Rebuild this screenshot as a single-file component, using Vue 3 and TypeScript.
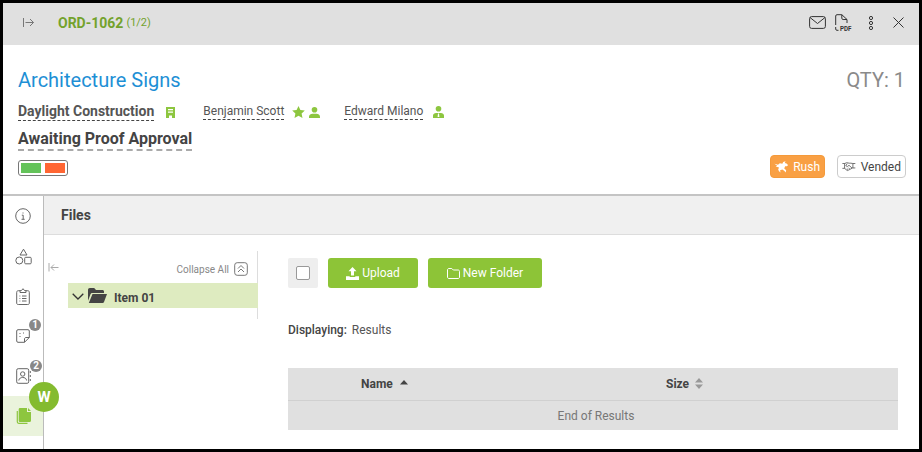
<script setup lang="ts">
const tabs = ['info', 'shapes', 'clip', 'note', 'contact', 'files'];
const badges: Record<string, number> = { note: 1, contact: 2 };
</script>

<template>
  <div class="frame">
    <header class="topbar">
      <svg class="expand" width="11" height="9" viewBox="0 0 11 9" fill="none" stroke="#777" stroke-width="1"><path d="M.5 0v9M2.500 4.500h8M7 1l3.500 3.500L7 8"/></svg>
      <span class="ord">ORD-1062</span>
      <span class="count">(1/2)</span>
      <div class="top-actions">
        <svg width="17" height="13" viewBox="0 0 17 13" fill="none" stroke="#333" stroke-width="1"><rect x="0.6" y="0.6" width="15.8" height="11.8" rx="2"/><path d="M1 1.500l7.500 6 7.500-6"/></svg>
        <svg class="pdf" width="17" height="17" viewBox="0 0 17 17" fill="none" stroke="#333" stroke-width="1"><path d="M.7 11V2C.7 1.200 1.200.7 2 .7h4.800L12 5.500V9M6.800.7v3.500c0 .8.500 1.300 1.300 1.300H12M.7 13v2.100c0 .8.500 1.200 1.300 1.200h1.500"/><text x="5" y="16.500" font-size="6.500" font-weight="700" fill="#333" stroke="none" font-family="Roboto, sans-serif" textLength="11.500" lengthAdjust="spacingAndGlyphs">PDF</text></svg>
        <svg class="dots" width="6" height="14" viewBox="0 0 6 14" fill="none" stroke="#333" stroke-width="1"><circle cx="3" cy="2" r="1.600"/><circle cx="3" cy="7" r="1.600"/><circle cx="3" cy="12" r="1.600"/></svg>
        <svg class="close" width="11" height="11" viewBox="0 0 11 11" fill="none" stroke="#333" stroke-width="1"><path d="M.5.5l10 10M10.500.5l-10 10"/></svg>
      </div>
    </header>

    <section class="summary">
      <div class="title-row">
        <h1>Architecture Signs</h1>
        <span class="qty">QTY: 1</span>
      </div>
      <div class="people">
        <span class="company dashed">Daylight Construction</span>
        <svg class="ic-building" width="9" height="11" viewBox="0 0 9 11"><path fill="#8dc63f" d="M0 0h9v11H6V8.500H3V11H0zM2 2v1.200h5V2zm0 2.500v1.200h5V4.500z" fill-rule="evenodd"/></svg>
        <span class="person dashed p1">Benjamin Scott</span>
        <svg class="ic-star" width="13" height="12" viewBox="0 0 13 12"><path fill="#8dc63f" d="M6.500 0l1.900 4 4.400.5-3.200 3 .9 4.400-4-2.200-4 2.200.9-4.400L.2 4.500 4.600 4z"/></svg>
        <svg class="ic-user" width="11" height="11" viewBox="0 0 11 11"><circle cx="5.500" cy="2.800" r="2.800" fill="#8dc63f"/><path fill="#8dc63f" d="M0 11V9.500C0 7.800 1.800 6.700 3.500 6.700h4C9.200 6.700 11 7.800 11 9.500V11z"/></svg>
        <span class="person dashed p2">Edward Milano</span>
        <svg class="ic-user2" width="11" height="12" viewBox="0 0 11 12"><circle cx="5.500" cy="2.800" r="2.800" fill="#8dc63f"/><path fill="#8dc63f" fill-rule="evenodd" d="M0 12V9.500C0 8 1.500 7 3 7h5c1.500 0 3 1 3 2.500V12zM5 7.500l-.4 3.500h1.800L6 7.500z"/></svg>
      </div>
      <div class="status"><span class="dashed-strong">Awaiting Proof Approval</span></div>
      <div class="bottom-row">
        <div class="progress"><i class="green"></i><i class="orange"></i></div>
        <div class="tags">
          <span class="tag rush">
            <svg width="17" height="14" viewBox="0 0 17 14" fill="#fff"><path d="M.5 3l4.300 1.200L7 2.500l3 .7L11 1l2.800-1-.8 2.300 2 .5 2 1.900-1.700 1.500h-2l-1 2.500L14.600 11l-.6 2.500-1.500-1.800-2.500-1.700-2.700 1 .5 2.500L6 12l-1-2 1-2.300-4-1.200 1.800-1z"/></svg>
            Rush
          </span>
          <span class="tag vended">
            <svg width="17" height="11" viewBox="0 0 17 11" fill="none" stroke="#555" stroke-width="1"><path d="M.5 1.800h2.700l2.800-1 3 .6h2l2.500.4h3M.5 7.800h2.700l3.300 2.700 1.500-.5 3-1.500 2-1.200h3.500M6.500 2L4.700 4.500l2 1 2-1.500 3.800 3.500M3.200 1.500v6.500M13.500 2v5.500M6 8l1.500 1.500M8 7l1.500 1.500"/></svg>
            Vended
          </span>
        </div>
      </div>
    </section>

    <div class="body">
      <nav class="side">
        <div v-for="t in tabs" :key="t" class="tab" :class="['tab-' + t, { active: t === 'files' }]">
          <svg v-if="t === 'info'" width="16" height="16" viewBox="0 0 16 16" fill="none" stroke="#666" stroke-width="1"><circle cx="8" cy="8" r="7.300"/><path d="M6.800 7.200h1.400v4M6.500 11.300h3.200M8 4.500v1"/></svg>
          <svg v-else-if="t === 'shapes'" width="17" height="17" viewBox="0 0 17 17" fill="none" stroke="#666" stroke-width="1"><path d="M8.500 1.200L12 7H5z"/><circle cx="4.300" cy="12.500" r="3.500"/><rect x="9.700" y="9.300" width="6.500" height="6.500" rx="1"/></svg>
          <svg v-else-if="t === 'clip'" width="14" height="17" viewBox="0 0 14 17" fill="none" stroke="#666" stroke-width="1"><path d="M4 2.700H2.300C1.300 2.700.7 3.300.7 4.300v10.900c0 .9.600 1.300 1.600 1.300h9.400c1 0 1.600-.4 1.600-1.300V4.300c0-1-.6-1.600-1.600-1.600H10M4 4.500V2.700l1.500-.2L7 .7l1.500 1.800 1.500.2v1.800zM3.500 8h.8M6 8h4.500M3.500 10.500h.8M6 10.500h4.500M3.500 13h.8M6 13h4.500"/></svg>
          <svg v-else-if="t === 'note'" width="14" height="14" viewBox="0 0 14 14" fill="none" stroke="#666" stroke-width="1"><path d="M13.300 8.500V2c0-.8-.5-1.300-1.300-1.300H2C1.200.7.700 1.200.7 2v10c0 .8.500 1.300 1.300 1.300h6.500zM8.500 13.300V10c0-.8.600-1.500 1.500-1.500h3.300"/><path stroke-dasharray="1 2" d="M4 4v6M7 4h3"/></svg>
          <svg v-else-if="t === 'contact'" width="15" height="16" viewBox="0 0 15 16" fill="none" stroke="#666" stroke-width="1"><rect x=".7" y=".7" width="12" height="14.600" rx="1.500"/><circle cx="6.700" cy="6" r="2.200"/><path d="M2.800 12.500c.3-2.300 2-3 3.900-3s3.600.7 3.900 3M14.300 3v2M14.300 7v2M14.300 11v2"/></svg>
          <svg v-else width="15" height="16" viewBox="0 0 15 16" fill="#8dc63f"><path d="M4 0h7v4h4v8.500c0 .8-.5 1.500-1.400 1.500H4c-.8 0-1.300-.7-1.300-1.500V1.300C2.700.6 3.200 0 4 0zM12 0l3 3h-3z"/><path d="M.7 3v10.500C.7 15 1.600 16 3 16h8.500v-1.200H3c-.7 0-1.100-.5-1.100-1.300V3z"/></svg>
          <span v-if="badges[t]" class="badge">{{ badges[t] }}</span>
        </div>
        <span class="presence">W</span>
      </nav>

      <main class="content">
        <div class="panel-title">Files</div>
        <div class="panel-body">
          <aside class="tree">
            <svg class="collapse-side" width="11" height="9" viewBox="0 0 11 9" fill="none" stroke="#aaa" stroke-width="1"><path d="M1 0v8.500M10.500 4.500H3M6 1.500l-3 3 3 3"/></svg>
            <div class="tree-inner">
              <div class="collapse-all">
                <span>Collapse All</span>
                <svg width="14" height="14" viewBox="0 0 14 14" fill="none" stroke="#777" stroke-width="1"><rect x=".7" y=".7" width="12.600" height="12.600" rx="2.500"/><path d="M4 6.500l3-3 3 3M4 10l3-3 3 3"/></svg>
              </div>
              <div class="tree-row">
                <svg class="chev" width="12" height="7" viewBox="0 0 12 7" fill="none" stroke="#333" stroke-width="1.300"><path d="M.7.7L6 6l5.300-5.300"/></svg>
                <svg class="folder" width="19" height="15" viewBox="0 0 19 15" fill="#444"><path d="M0 2C0 .9.700 0 1.800 0h4.400L8 2h6.500c.8 0 1.500.6 1.500 1.500V5H4.500C3.500 5 2.800 5.500 2.500 6.300L0 12.800z"/><path d="M4.500 6H19l-3 8c-.2.600-.7 1-1.400 1H.8z"/></svg>
                <span class="item-label">Item 01</span>
              </div>
            </div>
          </aside>

          <div class="files">
            <div class="toolbar">
              <div class="check-wrap"><span class="check"></span></div>
              <button class="btn upload" type="button">
                <svg width="13" height="13" viewBox="0 0 13 13" fill="#fff"><path d="M6.500 0l4 4.300H8v4.200H5V4.300H2.500zM0 9.300h3.700v.7h5.600v-.7H13V13H0z"/></svg>
                Upload
              </button>
              <button class="btn newfolder" type="button">
                <svg width="13" height="11" viewBox="0 0 13 11" fill="none" stroke="#fff" stroke-width="1"><path d="M.5 2C.5 1.100 1 .5 2 .5h2.800L6.300 2H11c1 0 1.500.5 1.500 1.500V9c0 1-.5 1.500-1.500 1.500H2C1 10.500.5 10 .5 9z"/></svg>
                New Folder
              </button>
            </div>
            <p class="displaying"><b>Displaying:</b> <span>Results</span></p>
            <div class="table">
              <div class="thead">
                <span class="col-name">Name <svg width="8" height="5" viewBox="0 0 8 5" class="sort"><path fill="#444" d="M4 0l4 4.500H0z"/></svg></span>
                <span class="col-size">Size <svg width="8" height="11" viewBox="0 0 8 11" class="sort2"><path fill="#999" d="M4 0l4 4.500H0zM4 11L0 6.500h8z"/></svg></span>
              </div>
              <div class="tfoot">End of Results</div>
            </div>
          </div>
        </div>
      </main>
    </div>
  </div>
</template>

<style>
html, body { margin: 0; padding: 0; background: #000; overflow: hidden; }
</style>

<style scoped>
* { box-sizing: border-box; }
.frame {
  width: 922px; height: 452px; border: 3px solid #000; background: #fff;
  display: flex; flex-direction: column; overflow: hidden;
  font-family: Roboto, "Liberation Sans", sans-serif; color: #444;
}
.topbar {
  height: 42px; background: #e0e0e0; display: flex; align-items: center;
  padding: 0 0 3px 20px; flex: none;
}
.ord { margin-left: 24px; font-size: 14px; font-weight: 700; color: #73a22c; }
.count { margin-left: 3px; font-size: 11px; font-weight: 400; color: #73a22c; }
.top-actions { margin-left: auto; display: flex; align-items: center; padding-right: 15px; }
.pdf { margin-left: 9px; }
.dots { margin-left: 16px; }
.close { margin-left: 19px; }

.summary { height: 151px; flex: none; border-bottom: 2px solid #c4c4c4; padding: 0 15px; }
.title-row { display: flex; justify-content: space-between; align-items: center; padding-top: 22px; height: 47px; }
h1 { margin: 0; font-size: 20px; font-weight: 400; color: #1e8fd5; line-height: 24px; }
.qty { font-size: 20px; color: #8a8a8a; line-height: 24px; margin-right: -1px; }
.people { display: flex; align-items: center; height: 22px; margin-top: 9px; }
.dashed { border-bottom: 1px dashed #444; line-height: 15px; }
.company { font-size: 14px; font-weight: 700; color: #555; line-height: 17px; }
.person { font-size: 12px; color: #555; }
.ic-building { margin-left: 12px; }
.p1 { margin-left: 28px; }
.ic-star { margin-left: 8px; }
.ic-user { margin-left: 4px; }
.p2 { margin-left: 24px; }
.ic-user2 { margin-left: 10px; }
.status { margin-top: 6px; height: 22px; }
.dashed-strong {
  display: inline-block; font-size: 16px; font-weight: 700; color: #444; line-height: 20px;
  border-bottom: 2px dashed #aaa;
}
.bottom-row { display: flex; justify-content: space-between; align-items: center; margin-top: 4px; }
.progress {
  width: 50px; height: 16px; border: 1px solid #777; border-radius: 3px;
  display: flex; gap: 4px; padding: 2px; margin-top: 3px;
}
.progress i { display: block; width: 20px; height: 10px; }
.green { background: #64c35a; }
.orange { background: #ff6633; }
.tags { display: flex; gap: 12px; margin-right: -2px; margin-top: 0; }
.tag {
  height: 23px; border-radius: 4px; display: flex; align-items: center; gap: 5px;
  font-size: 12px; padding: 0 4px;
}
.rush { width: 55px; background: #f9a044; border: 1px solid #f59a3a; color: #fff; padding-left: 3px; }
.vended { width: 69px; background: #fff; border: 1px solid #ccc; color: #444; }

.body { flex: 1; display: flex; min-height: 0; }
.side { width: 41px; flex: none; border-right: 1px solid #bbb; position: relative; }
.tab { height: 40px; display: flex; align-items: center; justify-content: center; position: relative; width: 40px; }
.tab.active { background: #eaf3dc; }
.badge {
  position: absolute; top: 3px; left: 26px; width: 12px; height: 12px; border-radius: 50%;
  background: #888; color: #fff; font-size: 10px; font-weight: 700; line-height: 12px; text-align: center;
}
.tab-contact .badge { top: 4px; left: 27px; }
.presence {
  position: absolute; left: 26px; top: 186px; width: 30px; height: 30px; border-radius: 50%;
  background: #84bb2f; color: #fff; font-size: 15px; font-weight: 700; line-height: 30px; text-align: center; z-index: 2;
}
.content { flex: 1; display: flex; flex-direction: column; min-width: 0; }
.panel-title {
  height: 39px; background: #f0f0f0; border-bottom: 1px solid #ddd; display: flex; align-items: center;
  padding-left: 17px; font-size: 14px; font-weight: 700; color: #444; flex: none;
}
.panel-body { flex: 1; display: flex; min-height: 0; }
.tree { width: 214px; flex: none; position: relative; padding: 16px 0 0 24px; }
.collapse-side { position: absolute; left: 4px; top: 28px; }
.tree-inner { border-right: 1px solid #ddd; height: 68px; }
.collapse-all { height: 32px; display: flex; align-items: center; justify-content: flex-end; gap: 5px; padding: 4px 9px 0 0; font-size: 10px; color: #888; }
.tree-row {
  height: 25px; background: #deebc0; display: flex; align-items: center; padding-left: 4px;
  font-size: 12px; font-weight: 700; color: #444; width: 190px;
}
.chev { margin-top: 1px; }
.folder { margin-left: 4px; margin-right: 7px; }
.item-label { margin-top: 4px; }
.files { flex: 1; padding: 23px 21px 0 30px; min-width: 0; }
.toolbar { display: flex; gap: 10px; align-items: center; }
.check-wrap { width: 30px; height: 30px; background: #eee; border-radius: 2px; display: flex; align-items: center; justify-content: center; }
.check { width: 14px; height: 14px; border: 1px solid #999; border-radius: 2px; background: #fff; }
.btn {
  height: 30px; background: #8dc437; color: #fff; border: 0; border-radius: 3px; font-family: inherit;
  font-size: 12px; font-weight: 400; display: flex; align-items: center; justify-content: center; gap: 3px; padding: 0;
}
.upload { width: 90px; }
.newfolder { width: 114px; }
.displaying { margin: 35px 0 0; font-size: 12px; line-height: 14px; color: #555; }
.displaying b { font-weight: 500; color: #444; }
.displaying span { margin-left: 2px; }
.table { margin-top: 31px; width: 610px; background: #e0e0e0; }
.thead { height: 33px; border-bottom: 1px solid #d0d0d0; position: relative; font-size: 12px; font-weight: 700; color: #444; display: flex; align-items: center; }
.col-name { margin-left: 73px; }
.col-size { position: absolute; left: 378px; }
.sort { margin-left: 4px; vertical-align: 3px; }
.sort2 { margin-left: 3px; vertical-align: -1px; }
.tfoot { height: 29px; display: flex; align-items: center; justify-content: center; font-size: 12px; color: #777; padding-left: 6px; }
</style>
